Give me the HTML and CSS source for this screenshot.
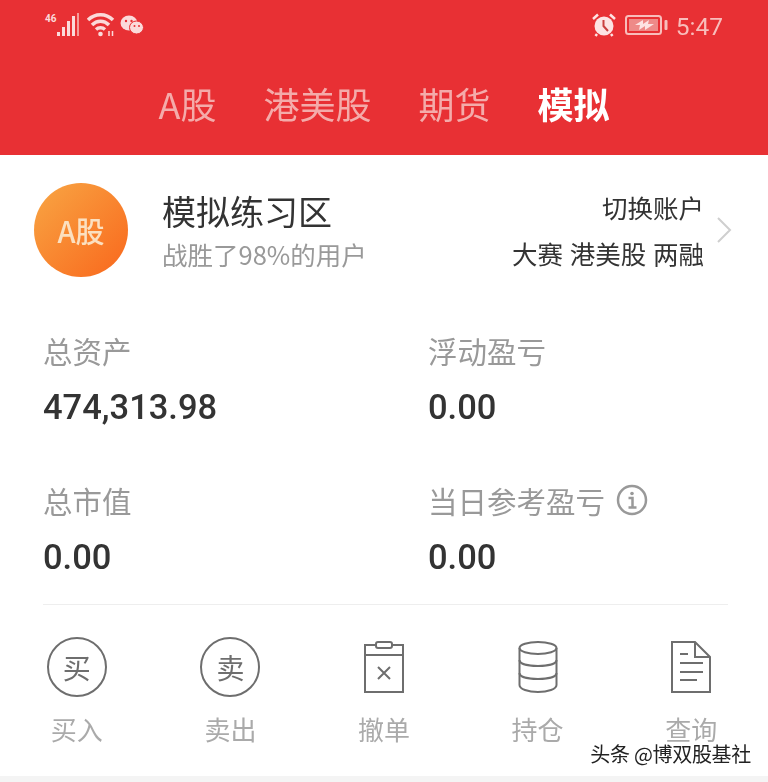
FILE: index.html
```html
<!DOCTYPE html>
<html lang="zh-CN">
<head>
  <meta charset="UTF-8" />
  <meta name="viewport" content="width=device-width, initial-scale=1.0"/>
  <title>模拟练习区</title>
  <link rel="stylesheet" href="styles.css">
</head>
<body>
  <div class="page">
    <header class="header">
      <div class="status-bar">
        <div class="status-group">
          <span class="net-label">46</span>
          <svg class="icon-signal" width="22" height="24" viewBox="0 0 22 24">
            <rect x="0" y="19" width="3" height="4" fill="#fbdada"/>
            <rect x="5" y="14" width="3" height="9" fill="#fbdada"/>
            <rect x="10" y="8" width="3" height="15" fill="#fbdada"/>
            <rect x="15" y="3" width="3" height="20" fill="#fbdada"/>
            <rect x="20" y="0" width="2" height="23" fill="#f59a98"/>
          </svg>
          <svg class="icon-wifi" width="28" height="24" viewBox="0 0 28 24" fill="none" stroke="#fbdada" stroke-width="3.500">
            <path d="M1 7 C8 0 19 0 26 7"/>
            <path d="M5 12 C10 7 17 7 22 12"/>
            <path d="M9 16.500 C11.500 14.300 15.500 14.300 18 16.500"/>
            <circle cx="13.500" cy="21" r="2.300" fill="#fbdada" stroke="none"/>
            <path d="M22 18 v5 M25.500 18 v5" stroke-width="1.500"/>
          </svg>
          <svg class="icon-wechat" width="24" height="20" viewBox="0 0 24 20">
            <ellipse cx="9" cy="8" rx="8.500" ry="7.500" fill="#fbdada"/>
            <ellipse cx="16.500" cy="12.500" rx="7" ry="6.500" fill="#fbdada" stroke="#e83034"/>
            <circle cx="6" cy="6" r="1.200" fill="#e83034"/>
            <circle cx="11.500" cy="6" r="1.200" fill="#e83034"/>
            <circle cx="14.500" cy="11" r="1" fill="#e83034"/>
            <circle cx="19" cy="11" r="1" fill="#e83034"/>
          </svg>
        </div>
        <div class="status-group">
          <svg class="icon-alarm" width="24" height="24" viewBox="0 0 24 24">
            <circle cx="12" cy="13" r="9.500" fill="#fde3e3"/>
            <path d="M1 6 L6 1.500 M23 6 L18 1.500 M5 21 L3.500 23 M19 21 L20.500 23" stroke="#fde3e3" stroke-width="2.500"/>
            <path d="M11.500 7 V13 L16 18" fill="none" stroke="#c9403f" stroke-width="2"/>
          </svg>
          <svg class="icon-battery" width="43" height="20" viewBox="0 0 43 20">
            <rect x="1" y="1" width="35" height="18" rx="2.500" fill="none" stroke="#f8bdbb" stroke-width="2"/>
            <rect x="4" y="4" width="29" height="12" fill="#ee8a88"/>
            <path d="M10 10 L18 5 L18 9 L24 5 L23 9 L29 9 L20 15 L20 11 L14 15 L15 10 Z" fill="#fde3e3"/>
            <rect x="39.500" y="5" width="3" height="10" rx="1" fill="#f8bdbb"/>
          </svg>
          <span class="clock">5:47</span>
        </div>
      </div>
      <nav class="tabs">
        <span class="tab">A股</span>
        <span class="tab">港美股</span>
        <span class="tab">期货</span>
        <span class="tab tab-active">模拟</span>
      </nav>
    </header>

    <section class="account">
      <div class="avatar">A股</div>
      <div class="account-info">
        <div class="account-title">模拟练习区</div>
        <div class="account-sub">战胜了98%的用户</div>
      </div>
      <div class="account-switch">
        <div class="switch-title">切换账户</div>
        <div class="switch-list">大赛 港美股 两融</div>
      </div>
      <svg class="chevron" width="16" height="28" viewBox="0 0 16 28" fill="none" stroke="#cfcfcf" stroke-width="2">
        <path d="M2 2 L14 14 L2 26"/>
      </svg>
    </section>

    <section class="stats">
      <div class="stat">
        <div class="stat-label">总资产</div>
        <div class="stat-value">474,313.98</div>
      </div>
      <div class="stat">
        <div class="stat-label">浮动盈亏</div>
        <div class="stat-value">0.00</div>
      </div>
      <div class="stat">
        <div class="stat-label">总市值</div>
        <div class="stat-value">0.00</div>
      </div>
      <div class="stat">
        <div class="stat-label">当日参考盈亏
          <svg class="icon-info" width="32" height="32" viewBox="0 0 32 32" fill="none" stroke="#999" stroke-width="2.500">
            <circle cx="16" cy="16" r="14"/>
            <circle cx="16" cy="9.500" r="1.800" fill="#999" stroke="none"/>
            <path d="M12.500 14 H16.500 V23 M12.500 23.500 H20.500"/>
          </svg>
        </div>
        <div class="stat-value">0.00</div>
      </div>
    </section>

    <nav class="actions">
      <div class="action">
        <div class="action-icon"><span class="circle-icon">买</span></div>
        <span class="action-label">买入</span>
      </div>
      <div class="action">
        <div class="action-icon"><span class="circle-icon">卖</span></div>
        <span class="action-label">卖出</span>
      </div>
      <div class="action">
        <div class="action-icon">
          <svg width="40" height="52" viewBox="0 0 40 52" fill="none" stroke="#6e6e6e" stroke-width="2">
            <rect x="1" y="4" width="38" height="47"/>
            <path d="M1 14 H39"/>
            <rect x="12" y="1" width="16" height="6" rx="2" fill="white"/>
            <path d="M14 26 L26 38 M26 26 L14 38"/>
          </svg>
        </div>
        <span class="action-label">撤单</span>
      </div>
      <div class="action">
        <div class="action-icon">
          <svg width="40" height="52" viewBox="0 0 40 52" fill="none" stroke="#6e6e6e" stroke-width="2">
            <ellipse cx="20" cy="7" rx="18.500" ry="6"/>
            <path d="M1.500 7 V44 C1.500 48 10 51 20 51 C30 51 38.500 48 38.500 44 V7"/>
            <path d="M1.500 19 C1.500 23 10 25 20 25 C30 25 38.500 23 38.500 19"/>
            <path d="M1.500 32 C1.500 36 10 38 20 38 C30 38 38.500 36 38.500 32"/>
          </svg>
        </div>
        <span class="action-label">持仓</span>
      </div>
      <div class="action">
        <div class="action-icon">
          <svg width="40" height="52" viewBox="0 0 40 52" fill="none" stroke="#6e6e6e" stroke-width="2">
            <path d="M1 1 H24 L39 16 V51 H1 Z"/>
            <path d="M24 1 V16 H39"/>
            <path d="M9 13 H17 M9 22 H32 M9 31 H32 M9 39 H26"/>
          </svg>
        </div>
        <span class="action-label">查询</span>
      </div>
    </nav>

    <div class="bottom-strip"></div>
    <div class="watermark">头条 @博双股基社</div>
  </div>
</body>
</html>
```

FILE: styles.css
```css
* {
  box-sizing: border-box;
}
body {
  margin: 0;
  background: white;
  font-family: 'Noto Sans CJK SC', 'Noto Sans', sans-serif;
}
.page {
  position: relative;
  display: flex;
  flex-direction: column;
  height: 782px;
  overflow: hidden;
  filter: blur(0.4px);
}
.header {
  background: #e83034;
  height: 155px;
}
.status-bar {
  display: flex;
  justify-content: space-between;
  align-items: center;
  height: 50px;
  padding: 0 45px;
}
.status-group {
  display: flex;
  align-items: center;
}
.net-label {
  width: 12px;
  margin-top: -14px;
  color: #fbdada;
  font-family: 'Roboto', sans-serif;
  font-size: 10px;
  font-weight: bold;
}
.icon-wifi {
  margin-left: 8px;
}
.icon-wechat {
  margin-left: 5px;
}
.icon-battery {
  margin-left: 9px;
}
.clock {
  margin: 3px 0 0 8px;
  color: #f8bdbb;
  font-family: 'Roboto', sans-serif;
  font-size: 24.5px;
  line-height: 30px;
}
.tabs {
  display: flex;
  justify-content: center;
  gap: 47px;
  padding-top: 27px;
  line-height: 52px;
  font-size: 36px;
  color: #f4abaa;
}
.tab-active {
  color: white;
  font-weight: bold;
}
.account {
  display: flex;
  align-items: center;
  padding: 28px 36px 0 34px;
}
.avatar {
  display: flex;
  justify-content: center;
  align-items: center;
  flex: none;
  width: 94px;
  height: 94px;
  border-radius: 50%;
  background: linear-gradient(135deg, #f8a644, #f9671c);
  color: #fbe0c0;
  font-size: 29px;
  font-weight: 500;
}
.account-info {
  flex: 1;
  margin-left: 34px;
}
.account-title {
  margin-top: -2px;
  font-size: 34px;
  line-height: 48px;
  color: #333;
}
.account-sub {
  margin-top: 1px;
  font-size: 25.5px;
  line-height: 36px;
  color: #999;
}
.account-switch {
  text-align: right;
  font-size: 25.5px;
  line-height: 36px;
  color: #333;
}
.switch-title {
  margin-top: -1px;
}
.switch-list {
  margin-top: 10px;
  word-spacing: 1px;
}
.chevron {
  margin-left: 12px;
}
.stats {
  display: grid;
  grid-template-columns: 385px 1fr;
  row-gap: 51px;
  margin: 0 40px 0 43px;
  padding: 53px 0 25px;
  border-bottom: 1px solid #eee;
}
.stat-label {
  display: flex;
  align-items: center;
  gap: 11px;
  height: 40px;
  font-size: 29.5px;
  color: #999;
}
.stat-value {
  margin-top: 15px;
  font-family: 'Roboto', sans-serif;
  font-size: 34.5px;
  font-weight: 500;
  line-height: 44px;
  color: #333;
}
.actions {
  display: grid;
  grid-template-columns: repeat(5, 1fr);
  padding-top: 32px;
}
.action {
  display: flex;
  flex-direction: column;
  align-items: center;
}
.action-icon {
  display: flex;
  justify-content: center;
  align-items: center;
  height: 60px;
}
.circle-icon {
  display: flex;
  justify-content: center;
  align-items: center;
  width: 60px;
  height: 60px;
  border: 2px solid #6e6e6e;
  border-radius: 50%;
  color: #6e6e6e;
  font-size: 28px;
}
.action-label {
  margin-top: 15px;
  font-size: 26px;
  line-height: 34px;
  color: #aaa;
}
.bottom-strip {
  margin-top: auto;
  height: 6px;
  background: #f4f4f4;
}
.watermark {
  position: absolute;
  right: 17px;
  bottom: 16px;
  font-size: 20px;
  line-height: 24px;
  letter-spacing: -0.3px;
  color: #222;
  text-shadow: 1px 0 1px white, -1px 0 1px white, 0 1px 1px white, 0 -1px 1px white;
}
```
